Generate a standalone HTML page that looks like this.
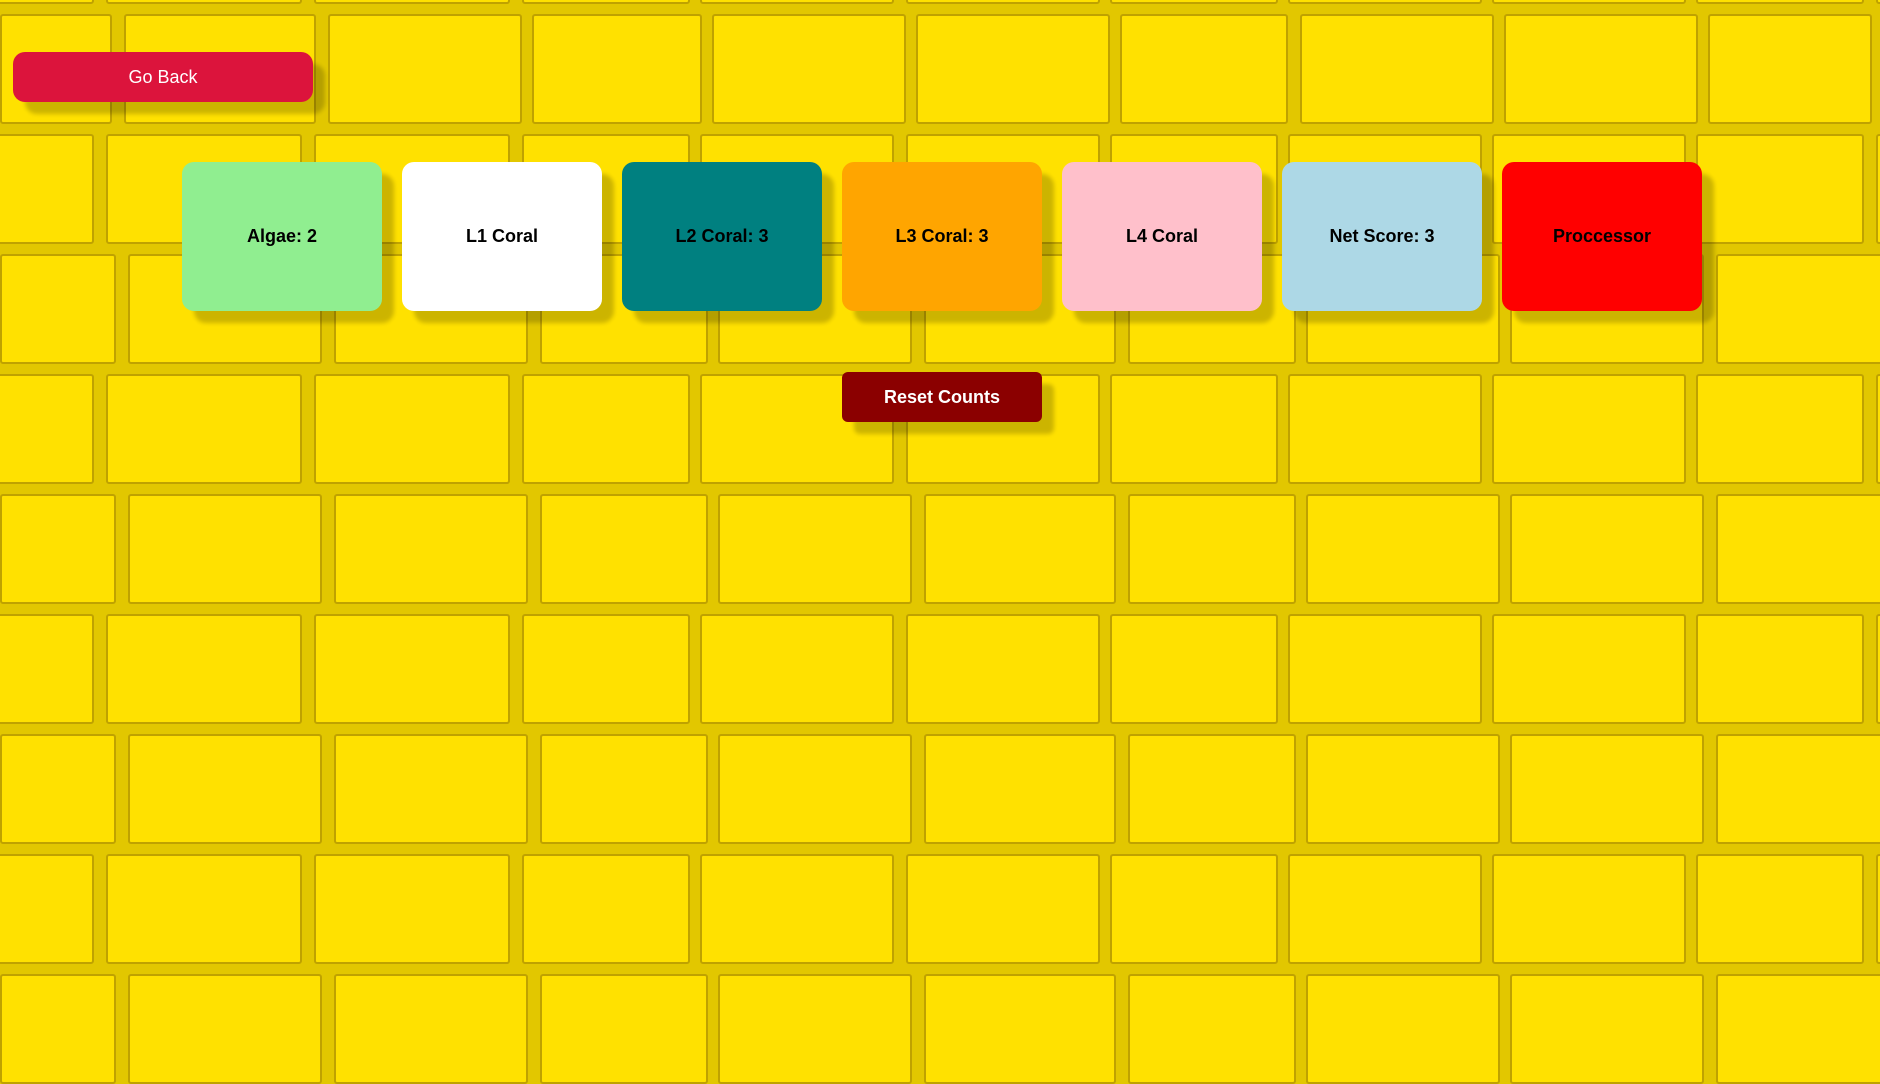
<!DOCTYPE html>
<html><head><meta charset="utf-8"><style>
html,body{margin:0;padding:0;width:1880px;height:1059px;overflow:hidden;background:#E2C700;font-family:"Liberation Sans",Arial,sans-serif}
.b{position:absolute;background:#FFE100;border:2px solid #BFA200;border-radius:3px;box-sizing:border-box}
.btn{position:absolute;border-radius:12px;display:flex;align-items:center;justify-content:center;box-shadow:12px 12px 4px rgba(0,0,0,0.2)}
.card{position:absolute;top:162px;width:200px;height:149px;border-radius:12px;display:flex;align-items:center;justify-content:center;font-weight:bold;font-size:18px;color:#000;box-shadow:12px 12px 4px rgba(0,0,0,0.2)}
</style></head><body>
<div id="bg"></div>
<div class="btn" style="left:13px;top:52px;width:300px;height:50px;background:#DC143C;color:#fff;font-size:18px">Go Back</div>
<div class="card" style="left:182px;background:#90EE90">Algae: 2</div>
<div class="card" style="left:402px;background:#fff">L1 Coral</div>
<div class="card" style="left:622px;background:#008080">L2 Coral: 3</div>
<div class="card" style="left:842px;background:#FFA500">L3 Coral: 3</div>
<div class="card" style="left:1062px;background:#FFC0CB">L4 Coral</div>
<div class="card" style="left:1282px;background:#ADD8E6">Net Score: 3</div>
<div class="card" style="left:1502px;background:#FF0000">Proccessor</div>
<div class="btn" style="left:842px;top:372px;width:200px;height:50px;border-radius:6px;background:#8B0000;color:#fff;font-size:18px;font-weight:bold">Reset Counts</div>
<script>
var top0=[[0,93],[103,263],[273,435],[443,585],[593,755],[763,925],[933,1073],[1083,1245],[1253,1415],[1423,1560]];
var even=[[0,97],[107,268],[278,440],[450,590],[598,760],[770,930],[940,1080],[1088,1250],[1258,1420],[1430,1580]];
var odd=[[-10,78],[88,252],[262,425],[435,575],[583,745],[755,917],[925,1065],[1073,1235],[1243,1405],[1413,1553],[1563,1700]];
var h='';
for(var r=-1;r<9;r++){
 var y=(12+r*100)*1.2, p;
 if(r===-1)p=odd; else if(r===0)p=top0; else p=(r%2===0)?even:odd;
 for(var i=0;i<p.length;i++){
  var x=p[i][0]*1.2,w=(p[i][1]-p[i][0])*1.2;
  h+='<div class="b" style="left:'+x+'px;top:'+y+'px;width:'+w+'px;height:'+(91*1.2)+'px"></div>';
 }
}
document.getElementById('bg').innerHTML=h;
</script>
</body></html>
